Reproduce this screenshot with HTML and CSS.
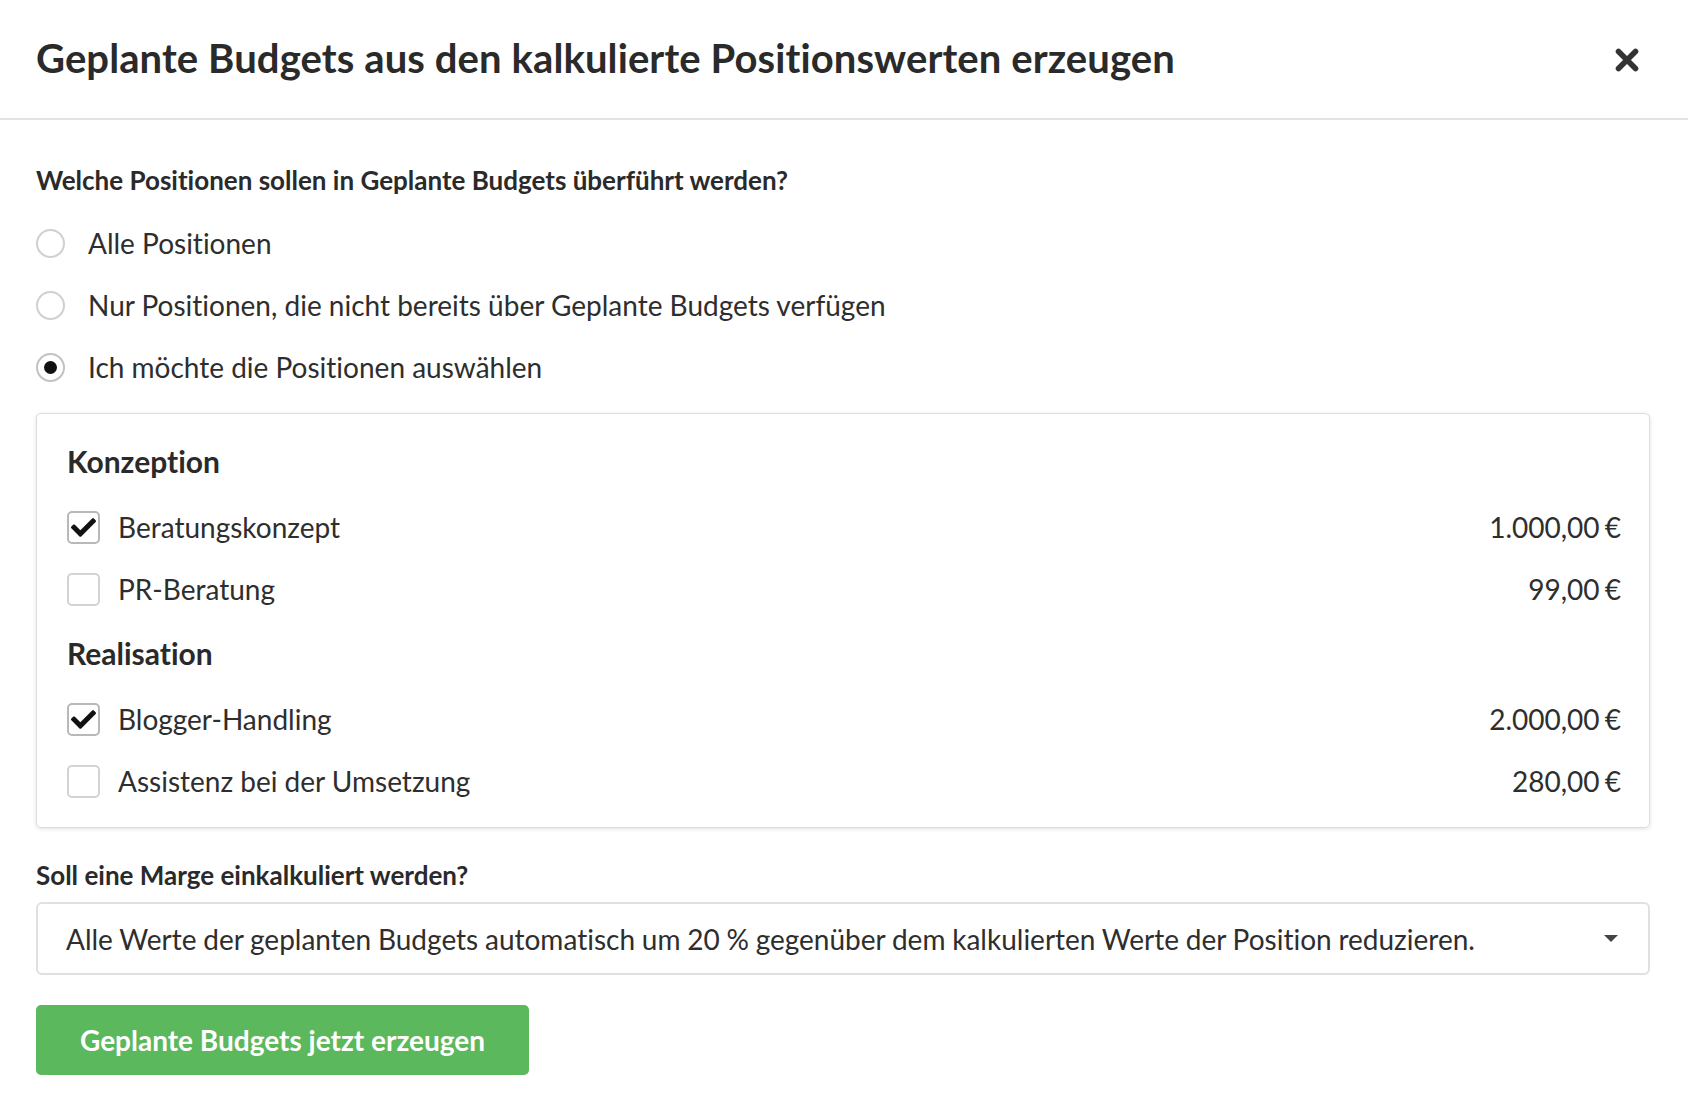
FILE: index.html
```html
<!DOCTYPE html>
<html lang="de">
<head>
<meta charset="utf-8">
<title>Geplante Budgets erzeugen</title>
<link rel="stylesheet" href="styles.css">
</head>
<body>
<div class="modal">
  <header class="modal-header">
    <h1 class="modal-title">Geplante Budgets aus den kalkulierte Positionswerten erzeugen</h1>
    <button class="close" type="button" aria-label="Schließen">
      <svg width="24" height="24" viewBox="0 0 24 24"><path d="M3.5 3.5 L20.5 20.5 M20.5 3.5 L3.5 20.5" stroke="#333" stroke-width="5.6" stroke-linecap="round" fill="none"/></svg>
    </button>
  </header>
  <div class="modal-body">
    <p class="question">Welche Positionen sollen in Geplante Budgets überführt werden?</p>
    <div class="radios">
      <label class="radio-row"><span class="radio"></span><span class="radio-label">Alle Positionen</span></label>
      <label class="radio-row"><span class="radio"></span><span class="radio-label">Nur Positionen, die nicht bereits über Geplante Budgets verfügen</span></label>
      <label class="radio-row"><span class="radio checked"></span><span class="radio-label">Ich möchte die Positionen auswählen</span></label>
    </div>
    <div class="panel">
      <div class="group">
        <h2 class="group-title">Konzeption</h2>
        <div class="item">
          <span class="checkbox checked"><svg width="25" height="25" viewBox="0 0 512 512"><path d="M173.898 439.404l-166.4-166.4c-9.997-9.997-9.997-26.206 0-36.204l36.203-36.204c9.997-9.998 26.207-9.998 36.204 0L192 312.69 432.095 72.596c9.997-9.997 26.207-9.997 36.204 0l36.203 36.204c9.997 9.997 9.997 26.206 0 36.204l-294.4 294.401c-9.998 9.997-26.207 9.997-36.204-.001z" fill="#111"/></svg></span>
          <span class="item-label">Beratungskonzept</span>
          <span class="amount">1.000,00 €</span>
        </div>
        <div class="item">
          <span class="checkbox"></span>
          <span class="item-label">PR-Beratung</span>
          <span class="amount">99,00 €</span>
        </div>
      </div>
      <div class="group">
        <h2 class="group-title">Realisation</h2>
        <div class="item">
          <span class="checkbox checked"><svg width="25" height="25" viewBox="0 0 512 512"><path d="M173.898 439.404l-166.4-166.4c-9.997-9.997-9.997-26.206 0-36.204l36.203-36.204c9.997-9.998 26.207-9.998 36.204 0L192 312.69 432.095 72.596c9.997-9.997 26.207-9.997 36.204 0l36.203 36.204c9.997 9.997 9.997 26.206 0 36.204l-294.4 294.401c-9.998 9.997-26.207 9.997-36.204-.001z" fill="#111"/></svg></span>
          <span class="item-label">Blogger-Handling</span>
          <span class="amount">2.000,00 €</span>
        </div>
        <div class="item">
          <span class="checkbox"></span>
          <span class="item-label">Assistenz bei der Umsetzung</span>
          <span class="amount">280,00 €</span>
        </div>
      </div>
    </div>
    <p class="question marge">Soll eine Marge einkalkuliert werden?</p>
    <div class="select">
      <span class="select-text">Alle Werte der geplanten Budgets automatisch um 20 % gegenüber dem kalkulierten Werte der Position reduzieren.</span>
      <span class="caret"></span>
    </div>
    <button class="btn-success" type="button">Geplante Budgets jetzt erzeugen</button>
  </div>
</div>
</body>
</html>
```

FILE: styles.css
```css
* { box-sizing: border-box; }
html, body { margin: 0; padding: 0; background: #fff; }
body {
  font-family: Lato, "Open Sans", "Liberation Sans", sans-serif;
  color: #2b2b2b;
  font-variant-ligatures: no-common-ligatures;
}
.modal { width: 1688px; }
.modal-header {
  height: 120px;
  padding: 0 37px 2px 36px;
  display: flex;
  align-items: center;
  justify-content: space-between;
  border-bottom: 2px solid #e3e3e3;
}
.modal-title {
  margin: 0;
  font-size: 40px;
  font-weight: 700;
  line-height: 48px;
  color: #2a2a2a;
  letter-spacing: 0.1px;
}
.close {
  border: 0;
  background: none;
  padding: 0;
  margin-right: 12px;
  margin-top: 4px;
  width: 24px;
  height: 24px;
  cursor: pointer;
}
.close svg { display: block; }
.modal-body {
  padding: 44px 38px 0 36px;
}
.question {
  margin: 0;
  font-size: 26px;
  font-weight: 700;
  line-height: 32px;
  color: #2a2a2a;
}
.radios { margin-top: 16px; }
.radio-row {
  height: 62px;
  display: flex;
  align-items: center;
}
.radio {
  width: 29px;
  height: 29px;
  border: 2px solid #d0d0d0;
  border-radius: 50%;
  margin-right: 23px;
  display: flex;
  align-items: center;
  justify-content: center;
  flex: none;
}
.radio.checked { border-color: #c2c2c2; }
.radio.checked::after {
  content: "";
  width: 13px;
  height: 13px;
  border-radius: 50%;
  background: #111;
}
.radio-label {
  font-size: 28px;
  line-height: 34px;
  color: #2e2e2e;
}
.panel {
  margin-top: 15px;
  border: 1px solid #dcdcdc;
  border-radius: 5px;
  box-shadow: 0 1px 4px rgba(0,0,0,0.12);
  padding: 29px 28px 15px 30px;
}
.group + .group { margin-top: 15px; }
.group-title {
  margin: 0 0 17px;
  font-size: 30px;
  font-weight: 700;
  line-height: 36px;
  color: #2a2a2a;
}
.item {
  height: 62px;
  display: flex;
  align-items: center;
}
.checkbox {
  width: 33px;
  height: 33px;
  border: 2px solid #d3d3d3;
  border-radius: 5px;
  margin-right: 18px;
  display: flex;
  align-items: center;
  justify-content: center;
  flex: none;
}
.checkbox.checked { border-color: #b8b8b8; }
.checkbox svg { display: block; }
.item-label {
  flex: 1;
  font-size: 28px;
  line-height: 34px;
  color: #2e2e2e;
}
.amount {
  font-size: 28px;
  line-height: 34px;
  color: #2e2e2e;
  word-spacing: -2px;
}
.marge { margin-top: 31px; }
.select {
  margin-top: 11px;
  height: 73px;
  border: 2px solid #e0e0e0;
  border-radius: 6px;
  display: flex;
  align-items: center;
  padding: 0 28px 0 28px;
}
.select-text {
  flex: 1;
  font-size: 28px;
  line-height: 34px;
  color: #2e2e2e;
  word-spacing: -0.4px;
}
.caret {
  width: 0;
  height: 0;
  border-left: 7px solid transparent;
  border-right: 7px solid transparent;
  border-top: 7px solid #444;
  margin-right: 2px;
}
.btn-success {
  margin-top: 30px;
  height: 70px;
  padding: 0 44px;
  border: 0;
  border-radius: 5px;
  background: #5cb85c;
  color: #fff;
  font-family: Lato, "Open Sans", "Liberation Sans", sans-serif;
  font-variant-ligatures: no-common-ligatures;
  font-size: 28px;
  font-weight: 700;
  cursor: pointer;
}
```
